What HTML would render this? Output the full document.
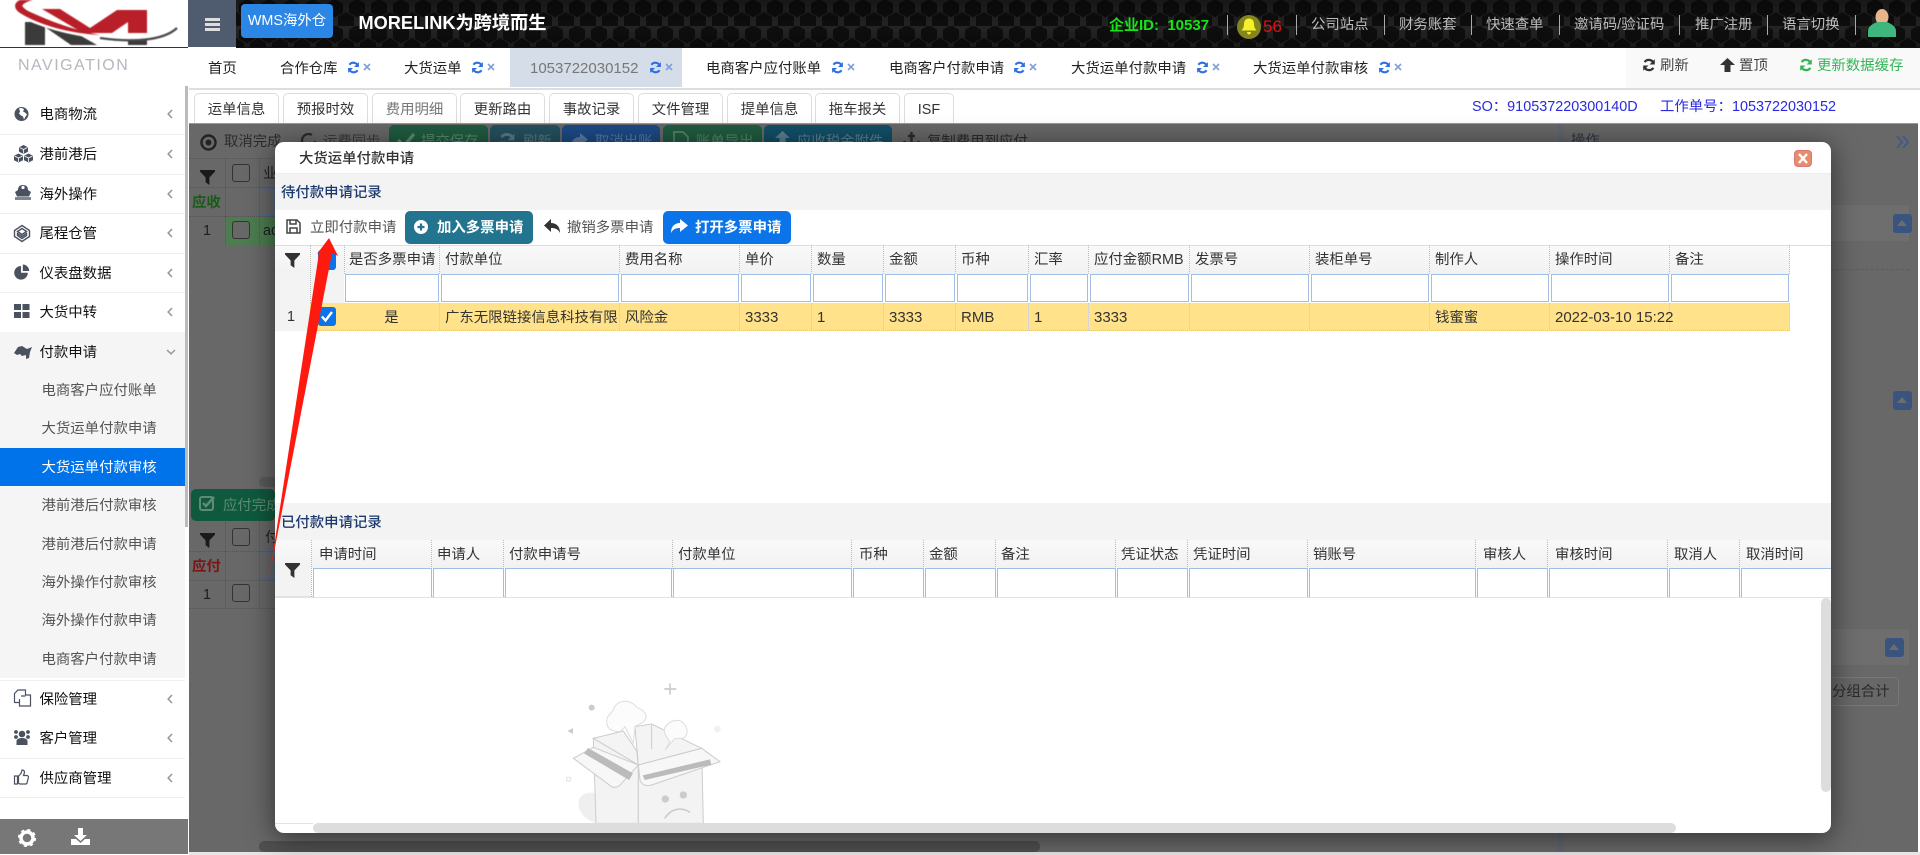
<!DOCTYPE html>
<html lang="zh"><head><meta charset="utf-8"><title>WMS</title>
<style>
html,body{margin:0;padding:0;background:#fff}
body{width:1920px;height:855px;overflow:hidden;position:relative;font-family:"Liberation Sans","Noto Sans CJK SC",sans-serif;font-size:14.4px;color:#222}
.a{position:absolute}
.t{position:absolute;white-space:nowrap;line-height:20px;font-size:14.4px;margin-top:1px}
.i{position:absolute}
.sep{position:absolute;top:15px;width:1px;height:20px;background:#aaa}
.h{color:#bbb}
.tb{position:absolute;top:93px;height:29px;background:#fff;border:1px solid #ddd;border-bottom:0;border-radius:5px 5px 0 0;box-sizing:content-box;text-align:center;line-height:32px;color:#333;overflow:hidden}
.m{position:absolute;left:39.500px;color:#111}
.s{position:absolute;left:41.500px;color:#555}
.hd{position:absolute;height:29px;line-height:31px;padding-left:5px;box-sizing:border-box;border-right:1px dotted #bbb;white-space:nowrap;overflow:hidden;color:#333}
.fi{position:absolute;box-sizing:border-box;border:1.5px solid #9fbfe9;background:#fff}
.c{position:absolute;top:303px;height:28px;line-height:30px;padding-left:5px;box-sizing:border-box;border-right:1px dotted #ccc;white-space:nowrap;overflow:hidden;color:#333}
.chev{position:absolute;left:167px;width:6px;height:10px}
</style></head><body>
<svg width="0" height="0" style="position:absolute"><defs>
<symbol id="rf" viewBox="0 0 16 16"><path d="M13.5 6.2A6 6 0 0 0 3 4.6" fill="none" stroke="currentColor" stroke-width="2.6"/><path d="M14.6 1.4v6h-6z" fill="currentColor"/><path d="M2.5 9.8A6 6 0 0 0 13 11.4" fill="none" stroke="currentColor" stroke-width="2.6"/><path d="M1.4 14.6v-6h6z" fill="currentColor"/></symbol>
<symbol id="fn" viewBox="0 0 16 16"><path d="M0 0h16v1.6L10 8v8L6 13V8L0 1.6z" fill="currentColor"/></symbol>
<symbol id="cv" viewBox="0 0 6 10"><path d="M5 1L1.2 5 5 9" fill="none" stroke="#999" stroke-width="1.6"/></symbol>
</defs></svg>

<!-- header -->
<svg class="a" style="left:236px;top:0" width="1684" height="48"><defs>
<pattern id="hx" width="22" height="26" patternUnits="userSpaceOnUse"><rect width="22" height="26" fill="#242424"/>
<path d="M11 -1l8 4.600v9.200l-8 4.600-8-4.600V3.600z" fill="#0e0e0e"/>
<path d="M0 12l8 4.600v9.200l-8 4.600-8-4.600v-9.200zM22 12l8 4.600v9.200l-8 4.600-8-4.600v-9.200z" fill="#0e0e0e"/></pattern>
<linearGradient id="hg" x1="0" y1="0" x2="0" y2="1"><stop offset="0" stop-color="#000" stop-opacity=".35"/><stop offset=".6" stop-color="#000" stop-opacity="0"/><stop offset="1" stop-color="#000" stop-opacity=".3"/></linearGradient></defs>
<rect width="1684" height="48" fill="url(#hx)"/><rect width="1684" height="48" fill="url(#hg)"/><rect y="47" width="1684" height="1" fill="#111"/></svg>
<div class="a" style="left:188px;top:0;width:48px;height:47px;background:#4f5b6e"></div>
<div class="a" style="left:205px;top:18px;width:15px;height:3px;background:#ddd"></div>
<div class="a" style="left:205px;top:23px;width:15px;height:3px;background:#ddd"></div>
<div class="a" style="left:205px;top:28px;width:15px;height:3px;background:#ddd"></div>
<div class="a" style="left:241px;top:4px;width:92px;height:34px;background:#2b86e6;border-radius:4px;color:#fff;text-align:center;line-height:35px;font-size:14.4px">WMS海外仓</div>
<div class="t" style="left:358.500px;top:12px;color:#fff;font-weight:bold;font-size:18.200px;line-height:20px">MORELINK为跨境而生</div>
<div class="t" style="left:1109px;top:15px;color:#14e614;font-weight:bold;font-size:15px">企业ID:&nbsp;&nbsp;10537</div>
<div class="sep" style="left:1227px"></div>
<svg class="i" style="left:1237px;top:15px" width="24" height="24"><circle cx="12" cy="12" r="12" fill="#85851f"/><path d="M12 3.500c-3.500 0-5 2.500-5 5.500 0 3.500-1.500 5-2.500 6.500h15c-1-1.500-2.500-3-2.500-6.500 0-3-1.500-5.500-5-5.500zM10 17h4c0 1.500-1 2.500-2 2.500s-2-1-2-2.500z" fill="#f4f02a"/></svg>
<div class="t" style="left:1263px;top:16px;color:#e21010;font-size:17px">56</div>
<div class="sep" style="left:1296px"></div>
<div class="t h" style="left:1311px;top:14px">公司站点</div><div class="sep" style="left:1384px"></div>
<div class="t h" style="left:1399px;top:14px">财务账套</div><div class="sep" style="left:1471px"></div>
<div class="t h" style="left:1486px;top:14px">快速查单</div><div class="sep" style="left:1559px"></div>
<div class="t h" style="left:1574px;top:14px">邀请码/验证码</div><div class="sep" style="left:1679px"></div>
<div class="t h" style="left:1695px;top:14px">推广注册</div><div class="sep" style="left:1767px"></div>
<div class="t h" style="left:1782px;top:14px">语言切换</div><div class="sep" style="left:1855px"></div>
<svg class="i" style="left:1868px;top:9px" width="28" height="28"><ellipse cx="14" cy="8" rx="6.500" ry="8" fill="#e8b48c"/><path d="M0 28v-6c0-5 5-7 9-9h10c4 2 9 4 9 9v6z" fill="#3fb67e"/></svg>

<!-- logo -->
<svg class="a" style="left:0;top:0" width="188" height="48">
<g style="filter:blur(.5px)">
<path d="M25 22h20v23H25z" fill="#3b3b3b"/>
<path d="M45 27l26 18h26L60 24z" fill="#3b3b3b"/>
<path d="M128 37h19v8h-19z" fill="#3b3b3b"/>
<path d="M42 9h18l30 19 27-18h30v23h-19V22l-16 11H83z" fill="#b91f29"/>
<path d="M18 14c22 12 52 20 82 23 30 3 58 0 72-8" fill="none" stroke="#fff" stroke-width="3.500"/>
<path d="M33 0C25 2 21 5 23 7c3 4 10 6 14 8 20 9 42 16 63 20-22-1-56-7-80-22C14 9 13 3 20 0z" fill="#b91f29"/>
<path d="M100 38c28 4 62 4 77-10" fill="none" stroke="#4a4a4a" stroke-width="2.300"/>
</g>
<rect y="47" width="188" height="1" fill="#333"/></svg>

<!-- sidebar -->
<div class="t" style="left:18px;top:55px;color:#b3b8be;font-size:16px;letter-spacing:1.500px">NAVIGATION</div>
<div class="a" style="left:185px;top:86px;width:3px;height:441px;background:#bbb"></div>
<div class="a" style="left:0;top:134px;width:185px;height:1px;background:#f0f0f0"></div>
<div class="a" style="left:0;top:174px;width:185px;height:1px;background:#f0f0f0"></div>
<div class="a" style="left:0;top:213px;width:185px;height:1px;background:#f0f0f0"></div>
<div class="a" style="left:0;top:253px;width:185px;height:1px;background:#f0f0f0"></div>
<div class="a" style="left:0;top:292px;width:185px;height:1px;background:#f0f0f0"></div>
<div class="a" style="left:0;top:332px;width:185px;height:346px;background:#f5f5f5"></div>
<div class="a" style="left:0;top:680px;width:185px;height:1px;background:#f0f0f0"></div>
<div class="a" style="left:0;top:758px;width:185px;height:1px;background:#f0f0f0"></div>
<div class="a" style="left:0;top:797px;width:185px;height:1px;background:#f0f0f0"></div>
<div class="a" style="left:0;top:448px;width:185px;height:38px;background:#0073ea"></div>

<div class="t m" style="top:104px">电商物流</div><div class="t m" style="top:144px">港前港后</div><div class="t m" style="top:184px">海外操作</div><div class="t m" style="top:223px">尾程仓管</div><div class="t m" style="top:263px">仪表盘数据</div><div class="t m" style="top:302px">大货中转</div><div class="t m" style="top:342px">付款申请</div>
<div class="t s" style="top:380px">电商客户应付账单</div><div class="t s" style="top:418px">大货运单付款申请</div><div class="t s" style="top:457px;color:#fff">大货运单付款审核</div><div class="t s" style="top:495px">港前港后付款审核</div><div class="t s" style="top:534px">港前港后付款申请</div><div class="t s" style="top:572px">海外操作付款审核</div><div class="t s" style="top:610px">海外操作付款申请</div><div class="t s" style="top:649px">电商客户付款申请</div>
<div class="t m" style="top:689px">保险管理</div><div class="t m" style="top:728px">客户管理</div><div class="t m" style="top:768px">供应商管理</div>

<svg class="chev" style="top:109px"><use href="#cv"/></svg><svg class="chev" style="top:149px"><use href="#cv"/></svg><svg class="chev" style="top:189px"><use href="#cv"/></svg><svg class="chev" style="top:228px"><use href="#cv"/></svg><svg class="chev" style="top:268px"><use href="#cv"/></svg><svg class="chev" style="top:307px"><use href="#cv"/></svg><svg class="chev" style="top:694px"><use href="#cv"/></svg><svg class="chev" style="top:733px"><use href="#cv"/></svg><svg class="chev" style="top:773px"><use href="#cv"/></svg>
<svg class="i" style="left:166px;top:349px" width="10" height="6"><path d="M1 1l4 3.800L9 1" fill="none" stroke="#999" stroke-width="1.500"/></svg>

<svg class="a" style="left:13px;top:100px" width="22" height="700" fill="#4a5260">
<!-- globe -->
<circle cx="8.500" cy="14" r="7"/><path d="M6 8.500c2-1 4-.5 5 1l-1 2 2 1 2 2-2 3-1 2-1-3-2-1-2-2 1-2z" fill="#fff"/>
<!-- cubes -->
<path d="M10.500 45l4.500 2.200v4.600l-4.500 2.200L6 51.800v-4.600zM5.500 53.500l4.500 2.200v4.600l-4.500 2.200L1 60.300v-4.600zM15.500 53.500l4.500 2.200v4.600l-4.500 2.200L11 60.300v-4.600z"/>
<path d="M6.500 47.500l4 2 4-2M1.500 56l4 2 4-2M11.500 56l4 2 4-2M10.500 49.500v4M5.500 58v4M15.500 58v4" fill="none" stroke="#fff" stroke-width=".8"/>
<!-- ship -->
<path d="M5 90c0-3 1.500-5 5-5s5 2 5 5l3 2-2 4.500H4L2 92z"/><circle cx="10" cy="87.500" r="1.600" fill="#fff"/><rect x="2" y="97" width="16" height="3" opacity=".7"/>
<!-- codepen -->
<path d="M9 125.500l7.500 5v6L9 141.500l-7.500-5v-6zM9 128.500l-4.500 3 4.500 3 4.500-3zM9 136.500l-4.500-3v2L9 138.500l4.500-3v-2z" fill="none" stroke="#4a5260" stroke-width="1.400"/>
<!-- pie -->
<path d="M8 166a6.800 6.800 0 1 0 6.800 6.800H8z"/><path d="M9.800 164.500a6.500 6.500 0 0 1 6.400 6.500H9.800z"/>
<!-- th-large -->
<rect x="1" y="204" width="7" height="6"/><rect x="9.500" y="204" width="7" height="6"/><rect x="1" y="212" width="7" height="6"/><rect x="9.500" y="212" width="7" height="6"/>
<!-- handshake-like -->
<path d="M1 253l4-6 4-1 5 3 5-2-2 5-1 6-3 1v-4l-4 1-2-2-3 1z"/>
<!-- copy -->
<path d="M1.500 593.500v9h5v3.500h11v-11h-5v-5H5zM6.500 599v7M8 596h4.500" fill="none" stroke="#4a5260" stroke-width="1.200"/>
<!-- users -->
<circle cx="9" cy="634" r="3.300"/><circle cx="3" cy="632" r="1.900"/><circle cx="15" cy="632" r="1.900"/><circle cx="3" cy="637" r="1.900"/><circle cx="15" cy="637" r="1.900"/><path d="M3.500 645v-4c0-2 3-3 5.500-3s5.500 1 5.500 3v4z"/>
<!-- thumb -->
<path d="M1.500 676h3v8h-3zM5.500 676l2.500-2.500 1-3.500c1.500 0 2.500 1 2.500 2.500l-1 3h3.500c1 0 1.500 1 1.500 1.500l-1.500 6c0 .8-.8 1-1.500 1H7l-1.500-.8z" fill="none" stroke="#4a5260" stroke-width="1.200"/>
</svg>
<div class="a" style="left:0;top:819px;width:188px;height:35px;background:#777"></div>
<svg class="i" style="left:18px;top:829px" width="18" height="18"><circle cx="9" cy="9" r="6" fill="none" stroke="#fff" stroke-width="3.500"/><circle cx="9" cy="9" r="8" fill="none" stroke="#fff" stroke-width="2.200" stroke-dasharray="3 3.300"/></svg>
<svg class="i" style="left:71px;top:828px" width="19" height="18"><path d="M7 0h5v7h4l-6.500 6L3 7h4z" fill="#fff"/><path d="M0 11h5l4.500 4 4.500-4h5v6H0z" fill="#fff"/></svg>

<!-- tabs -->
<div class="a" style="left:189px;top:88px;width:1731px;height:2px;background:#ddd"></div>
<div class="a" style="left:510px;top:48px;width:172px;height:39px;background:#d5dde8"></div>
<div class="a" style="left:1626px;top:48px;width:294px;height:40px;background:#f9f9f9"></div>
<div class="t" style="left:208px;top:58px">首页</div>
<div class="t" style="left:280px;top:58px">合作仓库</div>
<div class="t" style="left:404px;top:58px">大货运单</div>
<div class="t" style="left:530px;top:58px;color:#777;font-size:15px">1053722030152</div>
<div class="t" style="left:706px;top:58px">电商客户应付账单</div>
<div class="t" style="left:889px;top:58px">电商客户付款申请</div>
<div class="t" style="left:1071px;top:58px">大货运单付款申请</div>
<div class="t" style="left:1253px;top:58px">大货运单付款审核</div>
<svg class="i" style="left:347px;top:61px;color:#2f6fe0" width="13" height="13"><use href="#rf"/></svg><svg class="i" style="left:471px;top:61px;color:#2f6fe0" width="13" height="13"><use href="#rf"/></svg><svg class="i" style="left:649px;top:61px;color:#2f6fe0" width="13" height="13"><use href="#rf"/></svg><svg class="i" style="left:831px;top:61px;color:#2f6fe0" width="13" height="13"><use href="#rf"/></svg><svg class="i" style="left:1013px;top:61px;color:#2f6fe0" width="13" height="13"><use href="#rf"/></svg><svg class="i" style="left:1196px;top:61px;color:#2f6fe0" width="13" height="13"><use href="#rf"/></svg><svg class="i" style="left:1378px;top:61px;color:#2f6fe0" width="13" height="13"><use href="#rf"/></svg>
<svg class="i" style="left:363px;top:63px" width="8" height="8"><path d="M1 1l6 6M7 1L1 7" stroke="#7f9fdc" stroke-width="1.600"/></svg><svg class="i" style="left:487px;top:63px" width="8" height="8"><path d="M1 1l6 6M7 1L1 7" stroke="#7f9fdc" stroke-width="1.600"/></svg><svg class="i" style="left:665px;top:63px" width="8" height="8"><path d="M1 1l6 6M7 1L1 7" stroke="#7f9fdc" stroke-width="1.600"/></svg><svg class="i" style="left:847px;top:63px" width="8" height="8"><path d="M1 1l6 6M7 1L1 7" stroke="#7f9fdc" stroke-width="1.600"/></svg><svg class="i" style="left:1029px;top:63px" width="8" height="8"><path d="M1 1l6 6M7 1L1 7" stroke="#7f9fdc" stroke-width="1.600"/></svg><svg class="i" style="left:1212px;top:63px" width="8" height="8"><path d="M1 1l6 6M7 1L1 7" stroke="#7f9fdc" stroke-width="1.600"/></svg><svg class="i" style="left:1394px;top:63px" width="8" height="8"><path d="M1 1l6 6M7 1L1 7" stroke="#7f9fdc" stroke-width="1.600"/></svg>
<svg class="i" style="left:1642px;top:58px;color:#333" width="14" height="14"><use href="#rf"/></svg>
<div class="t" style="left:1660px;top:55px;color:#444">刷新</div>
<svg class="i" style="left:1720px;top:58px" width="15" height="14"><path d="M7.500 0L15 7h-4.500v7h-6V7H0z" fill="#333"/></svg>
<div class="t" style="left:1739px;top:55px;color:#444">置顶</div>
<svg class="i" style="left:1799px;top:58px;color:#35b558" width="14" height="14"><use href="#rf"/></svg>
<div class="t" style="left:1817px;top:55px;color:#35b558">更新数据缓存</div>

<!-- sub tabs -->
<div class="tb" style="left:194px;width:83px">运单信息</div><div class="tb" style="left:283px;width:83px">预报时效</div><div class="tb" style="left:372px;width:83px;color:#777">费用明细</div><div class="tb" style="left:460px;width:83px">更新路由</div><div class="tb" style="left:549px;width:83px">事故记录</div><div class="tb" style="left:638px;width:83px">文件管理</div><div class="tb" style="left:727px;width:83px">提单信息</div><div class="tb" style="left:815px;width:83px">拖车报关</div><div class="tb" style="left:904px;width:48px">ISF</div>
<div class="t" style="left:1472px;top:96px;color:#2a2ae0">SO：910537220300140D</div>
<div class="t" style="left:1660px;top:96px;color:#2a2ae0">工作单号：1053722030152</div>

<!-- dimmed page -->
<div class="a" style="left:189px;top:123px;width:1729px;height:729px;background:#686868;border-top:1px solid #999;box-sizing:border-box;overflow:hidden">
<div class="a" style="left:1369px;top:0;width:6px;height:729px;background:#5f6670"></div>
<div class="a" style="left:1375px;top:81px;width:345px;height:36px;background:#6e6e6e"></div>
<div class="a" style="left:1375px;top:505px;width:345px;height:36px;background:#6e6e6e"></div>
<div class="a" style="left:1375px;top:145px;width:345px;border-top:1px dashed #5c5c5c"></div>
<div class="t" style="left:1382px;top:6px;color:#2b3340">操作</div>
<svg class="i" style="left:1707px;top:11px" width="13" height="14"><path d="M1 1l5 6-5 6M7 1l5 6-5 6" fill="none" stroke="#3a5a8a" stroke-width="1.700"/></svg>
<div class="a" style="left:1704px;top:90px;width:19px;height:19px;background:#3a5480;border-radius:3px"><div class="a" style="left:4px;top:6px;border:5.500px solid transparent;border-bottom:6px solid #6d6d6d;border-top:0"></div></div>
<div class="a" style="left:1704px;top:267px;width:19px;height:19px;background:#3a5480;border-radius:3px"><div class="a" style="left:4px;top:6px;border:5.500px solid transparent;border-bottom:6px solid #6d6d6d;border-top:0"></div></div>
<div class="a" style="left:1696px;top:514px;width:19px;height:19px;background:#3a5480;border-radius:3px"><div class="a" style="left:4px;top:6px;border:5.500px solid transparent;border-bottom:6px solid #6d6d6d;border-top:0"></div></div>
<div class="a" style="left:1620px;top:553px;width:90px;height:29px;border:1px solid #777;border-radius:4px;box-sizing:border-box"></div>
<div class="t" style="left:1643px;top:557px;color:#2a2a2a">分组合计</div>

<svg class="i" style="left:11px;top:10px" width="17" height="17"><circle cx="8.500" cy="8.500" r="7" fill="none" stroke="#222" stroke-width="2.400"/><circle cx="8.500" cy="8.500" r="3" fill="#222"/></svg>
<div class="t" style="left:35px;top:7px;color:#2b2b2b">取消完成</div>
<svg class="i" style="left:111px;top:8px" width="18" height="18"><path d="M15 9a6.500 6.500 0 1 1-3-6" fill="none" stroke="#2b2b2b" stroke-width="2.200"/></svg>
<div class="t" style="left:134px;top:7px;color:#3b3b3b">运费同步</div>
<div class="a" style="left:200px;top:1px;width:99px;height:36px;background:#1f5c40;border-radius:5px"></div>
<svg class="i" style="left:208px;top:8px" width="18" height="16"><path d="M1 8l6 6L17 2" fill="none" stroke="#5a8a70" stroke-width="3.500"/></svg>
<div class="t" style="left:232px;top:7px;color:#5a8a70">提交保存</div>
<div class="a" style="left:301px;top:1px;width:70px;height:36px;background:#24505f;border-radius:5px"></div>
<svg class="i" style="left:309px;top:8px;color:#5a7a86" width="18" height="18"><use href="#rf"/></svg>
<div class="t" style="left:334px;top:7px;color:#5a7a86">刷新</div>
<div class="a" style="left:373px;top:1px;width:98px;height:36px;background:#1c4a86;border-radius:5px"></div>
<svg class="i" style="left:382px;top:9px" width="18" height="15"><path d="M9 0v4C4 4 0 7 0 14c2-4 5-5 9-5v4l8-6.500z" fill="#5a7aa5"/></svg>
<div class="t" style="left:406px;top:7px;color:#5a7aa5">取消出账</div>
<div class="a" style="left:474px;top:1px;width:99px;height:36px;background:#1f5c40;border-radius:5px"></div>
<svg class="i" style="left:483px;top:7px" width="18" height="18"><path d="M2 1h9l5 5v12H2z" fill="none" stroke="#5a8068" stroke-width="1.800"/></svg>
<div class="t" style="left:507px;top:7px;color:#5a8068">账单导出</div>
<div class="a" style="left:575px;top:1px;width:128px;height:36px;background:#124f68;border-radius:5px"></div>
<svg class="i" style="left:586px;top:7px" width="15" height="14"><path d="M7.500 0L15 7h-4.500v7h-6V7H0z" fill="#5a8090"/></svg>
<div class="t" style="left:608px;top:7px;color:#5a8090">应收税金附件</div>
<svg class="i" style="left:714px;top:8px" width="17" height="14"><path d="M8.500 0v14M1 9c1 3 4 5 7.500 5s6.500-2 7.500-5M5 4h7" fill="none" stroke="#2b2b2b" stroke-width="2.400"/></svg>
<div class="t" style="left:738px;top:7px;color:#2b2b2b">复制费用到应付</div>

<svg class="i" style="left:11px;top:46px;color:#1a1a1a" width="15" height="15"><use href="#fn"/></svg>
<div class="a" style="left:43px;top:40px;width:18px;height:18px;border:1px solid #333;border-radius:3px;box-sizing:border-box"></div>
<div class="t" style="left:74px;top:39px;color:#222">业</div>
<div class="t" style="left:3px;top:68px;color:#165b16;font-weight:bold">应收</div>
<div class="a" style="left:70px;top:64px;width:16px;height:27px;border:1px solid #4f6a8a;box-sizing:border-box"></div>
<div class="a" style="left:36px;top:93px;width:50px;height:28px;background:#4c7c50"></div>
<div class="t" style="left:14px;top:96px;color:#1d1d1d">1</div>
<div class="a" style="left:43px;top:97px;width:18px;height:18px;border:1px solid #333;border-radius:3px;background:#686868;box-sizing:border-box"></div>
<div class="t" style="left:74px;top:96px;color:#1d1d1d">ad</div>
<div class="a" style="left:0;top:34px;width:86px;border-top:1px dotted #555"></div><div class="a" style="left:0;top:63px;width:86px;border-top:1px dotted #555"></div><div class="a" style="left:0;top:92px;width:86px;border-top:1px dotted #555"></div>
<div class="a" style="left:36px;top:34px;height:87px;border-left:1px dotted #555"></div><div class="a" style="left:70px;top:34px;height:87px;border-left:1px dotted #555"></div>

<div class="a" style="left:70px;top:353px;width:16px;height:10px;background:#5a5a5a;border-radius:5px 0 0 5px"></div>
<div class="a" style="left:2px;top:365px;width:84px;height:32px;background:#0f5a3e;border-radius:5px"></div>
<svg class="i" style="left:10px;top:371px" width="18" height="18"><rect x="1" y="2" width="13" height="13" rx="2" fill="none" stroke="#5f8a76" stroke-width="2"/><path d="M4 8l3 3 8-9" fill="none" stroke="#5f8a76" stroke-width="2.500"/></svg>
<div class="t" style="left:34px;top:371px;color:#5f8a76">应付完成</div>
<svg class="i" style="left:11px;top:409px;color:#1a1a1a" width="15" height="15"><use href="#fn"/></svg>
<div class="a" style="left:43px;top:404px;width:18px;height:18px;border:1px solid #333;border-radius:3px;box-sizing:border-box"></div>
<div class="t" style="left:76px;top:403px;color:#222">付</div>
<div class="t" style="left:3px;top:432px;color:#7d1414;font-weight:bold">应付</div>
<div class="a" style="left:70px;top:428px;width:16px;height:27px;border:1px solid #4f6a8a;box-sizing:border-box"></div>
<div class="t" style="left:14px;top:460px;color:#1d1d1d">1</div>
<div class="a" style="left:43px;top:460px;width:18px;height:18px;border:1px solid #333;border-radius:3px;box-sizing:border-box"></div>
<div class="a" style="left:0;top:427px;width:86px;border-top:1px dotted #555"></div><div class="a" style="left:0;top:456px;width:86px;border-top:1px dotted #555"></div><div class="a" style="left:0;top:484px;width:86px;border-top:1px dotted #555"></div>
<div class="a" style="left:36px;top:398px;height:86px;border-left:1px dotted #555"></div><div class="a" style="left:70px;top:398px;height:86px;border-left:1px dotted #555"></div>
<div class="a" style="left:70px;top:717px;width:781px;height:11px;background:#505050;border-radius:5px"></div>
</div>
<div class="a" style="left:189px;top:852px;width:1731px;height:3px;background:#e6e6e6"></div>

<!-- modal -->
<div class="a" style="left:275px;top:142px;width:1556px;height:691px;background:#fff;border-radius:9px;box-shadow:0 4px 28px rgba(0,0,0,.55);overflow:hidden">
</div>
<div class="a" style="left:275px;top:142px;width:1556px;height:691px;border-radius:9px;overflow:hidden">
<div class="a" style="left:0;top:31px;width:1556px;height:37px;background:#f3f3f3;border-top:1px solid #eee;box-sizing:border-box"></div>
<div class="a" style="left:0;top:361px;width:1556px;height:37px;background:#f3f3f3"></div>
<div class="a" style="left:0;top:103px;width:1556px;height:1px;background:#ddd"></div>
<div class="a" style="left:0;top:104px;width:1515px;height:28px;background:linear-gradient(#f9f9f9,#f2f2f2)"></div>
<div class="a" style="left:0;top:132px;width:69px;height:57px;background:#f3f3f3"></div>
<div class="a" style="left:0;top:398px;width:1556px;height:28px;background:linear-gradient(#f9f9f9,#f2f2f2)"></div>
<div class="a" style="left:0;top:426px;width:36px;height:29px;background:#f3f3f3"></div>
<div class="a" style="left:0;top:454px;width:1556px;height:2px;background:#e2e2e2"></div>
</div>
<div class="t" style="left:299px;top:148px;color:#333;font-weight:500">大货运单付款申请</div>
<div class="a" style="left:1794px;top:150px;width:18px;height:17px;background:#e58d6d;border:1px solid #d77;border-radius:4px;box-sizing:border-box"></div>
<svg class="i" style="left:1798px;top:153px" width="10" height="11"><path d="M1 1l8 9M9 1L1 10" stroke="#fff" stroke-width="2.400"/></svg>
<div class="t" style="left:281px;top:182px;color:#1c3a6e;font-weight:500">待付款申请记录</div>
<svg class="i" style="left:286px;top:219px" width="15" height="15"><path d="M1 1h10l3 3v10H1z M4 1v4h6V1 M4 14V9h7v5" fill="none" stroke="#444" stroke-width="1.500"/></svg>
<div class="t" style="left:310px;top:217px;color:#555">立即付款申请</div>
<div class="a" style="left:405px;top:211px;width:128px;height:33px;background:#23758f;border-radius:5px"></div>
<svg class="i" style="left:414px;top:220px" width="14" height="14"><circle cx="7" cy="7" r="7" fill="#fff"/><path d="M7 3.500v7M3.500 7h7" stroke="#23758f" stroke-width="2.200"/></svg>
<div class="t" style="left:437px;top:217px;color:#fff;font-weight:bold">加入多票申请</div>
<svg class="i" style="left:544px;top:219px" width="16" height="15"><path d="M7 0v4c5 0 9 3 9 10-2-4-5-5-9-5v4L0 6.500z" fill="#333"/></svg>
<div class="t" style="left:567px;top:217px;color:#555">撤销多票申请</div>
<div class="a" style="left:663px;top:211px;width:128px;height:33px;background:#0a74e8;border-radius:5px"></div>
<svg class="i" style="left:671px;top:219px" width="17" height="15"><path d="M9 0v4C4 4 0 7 0 14c2-4 5-5 9-5v4l8-6.500z" fill="#fff"/></svg>
<div class="t" style="left:695px;top:217px;color:#fff;font-weight:bold">打开多票申请</div>

<!-- table 1 -->
<svg class="i" style="left:285px;top:253px;color:#333" width="15" height="15"><use href="#fn"/></svg>
<div class="a" style="left:310px;top:245px;height:86px;border-left:1px dotted #bbb"></div>
<div class="a" style="left:318px;top:250px;width:18px;height:20px;background:#0a74e8;border-radius:3px"></div>
<div class="hd" style="left:344px;top:245px;width:96px;background:none">是否多票申请</div>
<div class="hd" style="left:440px;top:245px;width:180px">付款单位</div>
<div class="hd" style="left:620px;top:245px;width:120px">费用名称</div>
<div class="hd" style="left:740px;top:245px;width:72px">单价</div>
<div class="hd" style="left:812px;top:245px;width:72px">数量</div>
<div class="hd" style="left:884px;top:245px;width:72px">金额</div>
<div class="hd" style="left:956px;top:245px;width:73px">币种</div>
<div class="hd" style="left:1029px;top:245px;width:60px">汇率</div>
<div class="hd" style="left:1089px;top:245px;width:101px">应付金额RMB</div>
<div class="hd" style="left:1190px;top:245px;width:120px">发票号</div>
<div class="hd" style="left:1310px;top:245px;width:120px">装柜单号</div>
<div class="hd" style="left:1430px;top:245px;width:120px">制作人</div>
<div class="hd" style="left:1550px;top:245px;width:120px">操作时间</div>
<div class="hd" style="left:1670px;top:245px;width:120px">备注</div>
<div class="a" style="left:344px;top:245px;height:29px;border-left:1px dotted #bbb"></div>

<div class="fi" style="left:345px;top:274px;width:94px;height:28px"></div><div class="fi" style="left:441px;top:274px;width:178px;height:28px"></div><div class="fi" style="left:621px;top:274px;width:118px;height:28px"></div><div class="fi" style="left:741px;top:274px;width:70px;height:28px"></div><div class="fi" style="left:813px;top:274px;width:70px;height:28px"></div><div class="fi" style="left:885px;top:274px;width:70px;height:28px"></div><div class="fi" style="left:957px;top:274px;width:71px;height:28px"></div><div class="fi" style="left:1030px;top:274px;width:58px;height:28px"></div><div class="fi" style="left:1090px;top:274px;width:99px;height:28px"></div><div class="fi" style="left:1191px;top:274px;width:118px;height:28px"></div><div class="fi" style="left:1311px;top:274px;width:118px;height:28px"></div><div class="fi" style="left:1431px;top:274px;width:118px;height:28px"></div><div class="fi" style="left:1551px;top:274px;width:118px;height:28px"></div><div class="fi" style="left:1671px;top:274px;width:118px;height:28px"></div>

<div class="a" style="left:310px;top:303px;width:1480px;height:28px;background:#ffe28a;border-bottom:1px dotted #d9c88a;box-sizing:border-box"></div>
<div class="t" style="left:287px;top:306px;color:#333">1</div>
<div class="a" style="left:318px;top:307px;width:18px;height:19px;background:#0a74e8;border-radius:3px"></div>
<svg class="i" style="left:320px;top:310px" width="14" height="13"><path d="M2 6.500l3.500 4L12 2" fill="none" stroke="#fff" stroke-width="2.400"/></svg>
<div class="c" style="left:344px;width:96px;padding:0;text-align:center">是</div>
<div class="c" style="left:440px;width:180px">广东无限链接信息科技有限</div>
<div class="c" style="left:620px;width:120px">风险金</div>
<div class="c" style="left:740px;width:72px;font-size:15px">3333</div>
<div class="c" style="left:812px;width:72px;font-size:15px">1</div>
<div class="c" style="left:884px;width:72px;font-size:15px">3333</div>
<div class="c" style="left:956px;width:73px;font-size:15px">RMB</div>
<div class="c" style="left:1029px;width:60px;font-size:15px">1</div>
<div class="c" style="left:1089px;width:101px;font-size:15px">3333</div>
<div class="c" style="left:1190px;width:120px"></div>
<div class="c" style="left:1310px;width:120px"></div>
<div class="c" style="left:1430px;width:120px">钱蜜蜜</div>
<div class="c" style="left:1550px;width:120px;font-size:15px;overflow:visible">2022-03-10 15:22</div>
<div class="c" style="left:1670px;width:120px"></div>

<!-- table 2 -->
<div class="t" style="left:281px;top:512px;color:#1c3a6e;font-weight:500">已付款申请记录</div>
<svg class="i" style="left:285px;top:563px;color:#333" width="15" height="15"><use href="#fn"/></svg>
<div class="a" style="left:311px;top:540px;height:57px;border-left:1px dotted #bbb"></div>
<div class="hd" style="left:311px;top:540px;width:121px;padding-left:8px">申请时间</div>
<div class="hd" style="left:432px;top:540px;width:72px">申请人</div>
<div class="hd" style="left:504px;top:540px;width:169px">付款申请号</div>
<div class="hd" style="left:673px;top:540px;width:179px">付款单位</div>
<div class="hd" style="left:852px;top:540px;width:72px;padding-left:7px">币种</div>
<div class="hd" style="left:924px;top:540px;width:72px">金额</div>
<div class="hd" style="left:996px;top:540px;width:120px">备注</div>
<div class="hd" style="left:1116px;top:540px;width:72px">凭证状态</div>
<div class="hd" style="left:1188px;top:540px;width:120px">凭证时间</div>
<div class="hd" style="left:1308px;top:540px;width:168px">销账号</div>
<div class="hd" style="left:1476px;top:540px;width:72px;padding-left:7px">审核人</div>
<div class="hd" style="left:1548px;top:540px;width:120px;padding-left:7px">审核时间</div>
<div class="hd" style="left:1668px;top:540px;width:72px;padding-left:6px">取消人</div>
<div class="hd" style="left:1740px;top:540px;width:91px;padding-left:6px;border:0">取消时间</div>
<div class="fi" style="left:313px;top:568px;width:119px;height:29px;border-bottom:0"></div><div class="fi" style="left:433px;top:568px;width:71px;height:29px;border-bottom:0"></div><div class="fi" style="left:505px;top:568px;width:167px;height:29px;border-bottom:0"></div><div class="fi" style="left:673px;top:568px;width:179px;height:29px;border-bottom:0"></div><div class="fi" style="left:853px;top:568px;width:71px;height:29px;border-bottom:0"></div><div class="fi" style="left:925px;top:568px;width:71px;height:29px;border-bottom:0"></div><div class="fi" style="left:997px;top:568px;width:119px;height:29px;border-bottom:0"></div><div class="fi" style="left:1117px;top:568px;width:71px;height:29px;border-bottom:0"></div><div class="fi" style="left:1189px;top:568px;width:119px;height:29px;border-bottom:0"></div><div class="fi" style="left:1309px;top:568px;width:167px;height:29px;border-bottom:0"></div><div class="fi" style="left:1477px;top:568px;width:71px;height:29px;border-bottom:0"></div><div class="fi" style="left:1549px;top:568px;width:119px;height:29px;border-bottom:0"></div><div class="fi" style="left:1669px;top:568px;width:71px;height:29px;border-bottom:0"></div><div class="fi" style="left:1741px;top:568px;width:90px;height:29px;border:0;border-top:1.500px solid #9fbfe9;border-left:1.500px solid #9fbfe9"></div>

<!-- illustration -->
<svg class="a" style="left:560px;top:670px" width="164" height="153" viewBox="0 0 492 459">
<path d="M55 400c0-30 40-40 60-25l110 85H110C75 450 55 425 55 400z" fill="#efefef"/>
<path d="M100 205l90-22 40 60 5 42z" fill="#f4f4f4" stroke="#ccc" stroke-width="3"/>
<path d="M225 170l50-8 150 73-190 50z" fill="#f4f4f4" stroke="#ccc" stroke-width="3"/>
<path d="M275 162v75" stroke="#ccc" stroke-width="3"/>
<path d="M180 185c-20 0-40-5-40-30 0-20 15-25 20-35 5-20 25-30 45-25 20 5 20 15 30 20 15 5 30 20 20 35-5 10-25 15-30 20l-5 50-25-50z" fill="#fcfcfc" stroke="#ddd" stroke-width="3"/>
<path d="M330 215c-15-20-25-35-10-50 15-15 40-20 50-5 15 15 15 35 0 45l-25 0-30 35z" fill="#fcfcfc" stroke="#ddd" stroke-width="3"/>
<path d="M100 205l135 80v175H108z" fill="#f3f3f3" stroke="#ccc" stroke-width="3"/>
<path d="M235 285l190-50 5 225H235z" fill="#f3f3f3" stroke="#ccc" stroke-width="3"/>
<path d="M100 232l-60 33 115 85c10 5 20 2 30-10l50-55z" fill="#f7f7f7" stroke="#ccc" stroke-width="3"/>
<path d="M72 250l12-16 135 76-12 20z" fill="#bbb"/>
<path d="M235 285l190-50 55 40-205 70c-15 5-30 0-35-15z" fill="#f7f7f7" stroke="#ccc" stroke-width="3"/>
<path d="M248 316l202-48 4 16-200 46z" fill="#bbb"/>
<path d="M330 40v34M313 57h36" stroke="#ccc" stroke-width="5"/>
<circle cx="95" cy="113" r="9" fill="#ccc"/><path d="M22 183l17-9v18z" fill="#ccc"/>
<rect x="20" y="322" width="11" height="11" fill="none" stroke="#ddd" stroke-width="2.500"/>
<circle cx="472" cy="177" r="10" fill="#f0f0f0"/>
<circle cx="316" cy="387" r="11" fill="#ccc"/><circle cx="370" cy="375" r="11" fill="#ccc"/>
<path d="M314 445c20-30 50-35 76-18" fill="none" stroke="#ccc" stroke-width="5"/>
</svg>

<!-- scrollbars -->
<div class="a" style="left:1821px;top:598px;width:10px;height:194px;background:#ddd;border-radius:5px"></div>
<div class="a" style="left:313px;top:823px;width:1363px;height:10px;background:#ddd;border-radius:5px"></div>
<div class="a" style="left:275px;top:823px;width:38px;height:1px;background:#e2e2e2"></div>

<!-- red arrow -->
<svg class="a" style="left:260px;top:230px" width="90" height="350"><path d="M69 8L78 26 72 23 10 343 59 23 57 24z" fill="#ff1a10"/></svg>
</body></html>
